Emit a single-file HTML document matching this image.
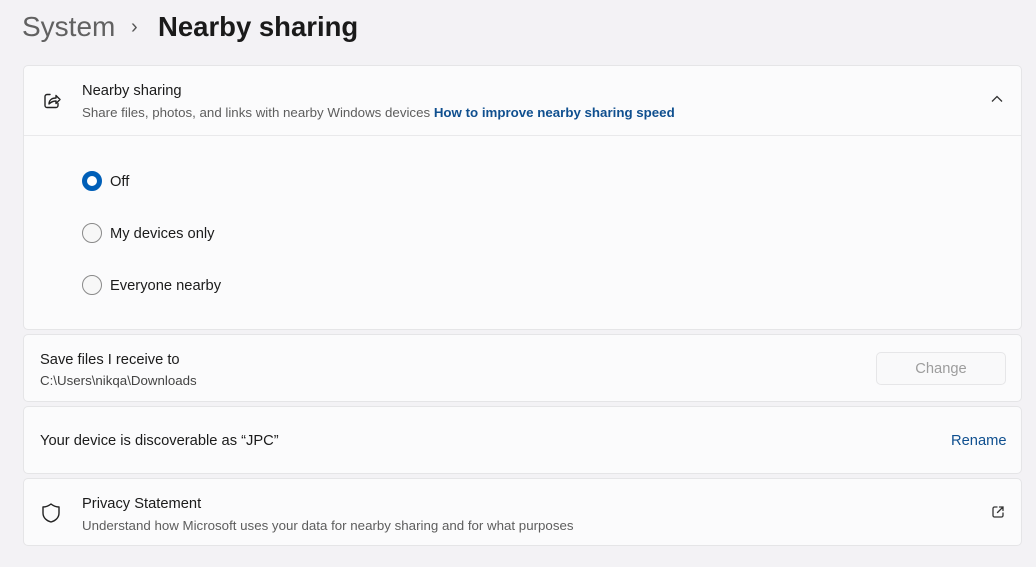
<!DOCTYPE html>
<html><head><meta charset="utf-8"><style>
*{box-sizing:border-box;margin:0;padding:0}
body{width:1036px;height:567px;overflow:hidden;background:#f3f2f5;font-family:"Segoe UI","Liberation Sans",sans-serif;color:#1b1b1b;position:relative}
.t{position:absolute;white-space:nowrap}
.card{position:absolute;left:23px;width:999px;background:#fbfbfc;border:1px solid #e5e5e7;border-radius:5px}
.sub{font-size:13.3px;color:#5d5d5d}
.radio{position:absolute;width:20px;height:20px;border-radius:50%;border:1px solid #8a8a8a;background:#f7f7f7}
</style></head><body>
<div class="t" style="left:22px;top:11px;font-size:28px;color:#616161">System</div>
<div class="t" style="left:131px;top:16px;font-size:20px;color:#555">›</div>
<div class="t" style="left:158px;top:11px;font-size:27.5px;font-weight:600;color:#1a1a1a">Nearby sharing</div>

<div class="card" style="top:65px;height:265px">
  <div style="position:absolute;left:0;right:0;top:69px;border-top:1px solid #e9e9eb"></div>
  <svg style="position:absolute;left:18px;top:25px" width="20" height="20" viewBox="0 0 20 20" fill="none" stroke="#222" stroke-width="1.4" stroke-linejoin="round" stroke-linecap="round"><path d="M8 3.5H5a2 2 0 0 0-2 2v9a2 2 0 0 0 2 2h9a2 2 0 0 0 2-2v-2"/><path d="M7 13c0-4 3-6 7-6V4.5l4 4-4 4V10c-3 0-5 1-7 3z"/></svg>
  <div class="t" style="left:58px;top:17px;font-size:14.7px">Nearby sharing</div>
  <div class="t sub" style="left:58px;top:39px">Share files, photos, and links with nearby Windows devices <span style="color:#0f4f8f;font-weight:600">How to improve nearby sharing speed</span></div>
  <svg style="position:absolute;left:967px;top:29px" width="12" height="8" viewBox="0 0 12 8" fill="none" stroke="#333" stroke-width="1.3"><path d="M1 6.5L6 1.5l5 5"/></svg>
  <div class="radio" style="left:58px;top:105px;border:5px solid #005fb8;background:#fff"></div>
  <div class="t" style="left:86px;top:108px;font-size:14.7px">Off</div>
  <div class="radio" style="left:58px;top:157px"></div>
  <div class="t" style="left:86px;top:160px;font-size:14.7px">My devices only</div>
  <div class="radio" style="left:58px;top:209px"></div>
  <div class="t" style="left:86px;top:212px;font-size:14.7px">Everyone nearby</div>
</div>

<div class="card" style="top:334px;height:68px">
  <div class="t" style="left:16px;top:17px;font-size:14.7px">Save files I receive to</div>
  <div class="t sub" style="left:16px;top:38px;color:#444">C:\Users\nikqa\Downloads</div>
  <div style="position:absolute;left:852px;top:17px;width:130px;height:33px;border:1px solid #e6e6e8;border-radius:5px;background:#f9f9fa;color:#9d9d9d;font-size:14.7px;text-align:center;line-height:33px">Change</div>
</div>

<div class="card" style="top:406px;height:68px">
  <div class="t" style="left:16px;top:26px;font-size:14.7px">Your device is discoverable as “JPC”</div>
  <div class="t" style="left:927px;top:26px;font-size:14.7px;color:#0f4f8f">Rename</div>
</div>

<div class="card" style="top:478px;height:68px">
  <svg style="position:absolute;left:17px;top:23px" width="20" height="22" viewBox="0 0 20 22" fill="none" stroke="#222" stroke-width="1.4" stroke-linejoin="round"><path d="M10 2c2.5 2 5 3 8 3v6c0 5-4 8-8 9-4-1-8-4-8-9V5c3 0 5.5-1 8-3z"/></svg>
  <div class="t" style="left:58px;top:17px;font-size:14.7px">Privacy Statement</div>
  <div class="t sub" style="left:58px;top:39px">Understand how Microsoft uses your data for nearby sharing and for what purposes</div>
  <svg style="position:absolute;left:967px;top:26px" width="14" height="14" viewBox="0 0 14 14" fill="none" stroke="#333" stroke-width="1.3" stroke-linecap="round"><path d="M6 2H3.5A1.5 1.5 0 0 0 2 3.5v7A1.5 1.5 0 0 0 3.5 12h7a1.5 1.5 0 0 0 1.5-1.5V8"/><path d="M8.5 2H12v3.5M12 2L6.5 7.5"/></svg>
</div>
</body></html>
